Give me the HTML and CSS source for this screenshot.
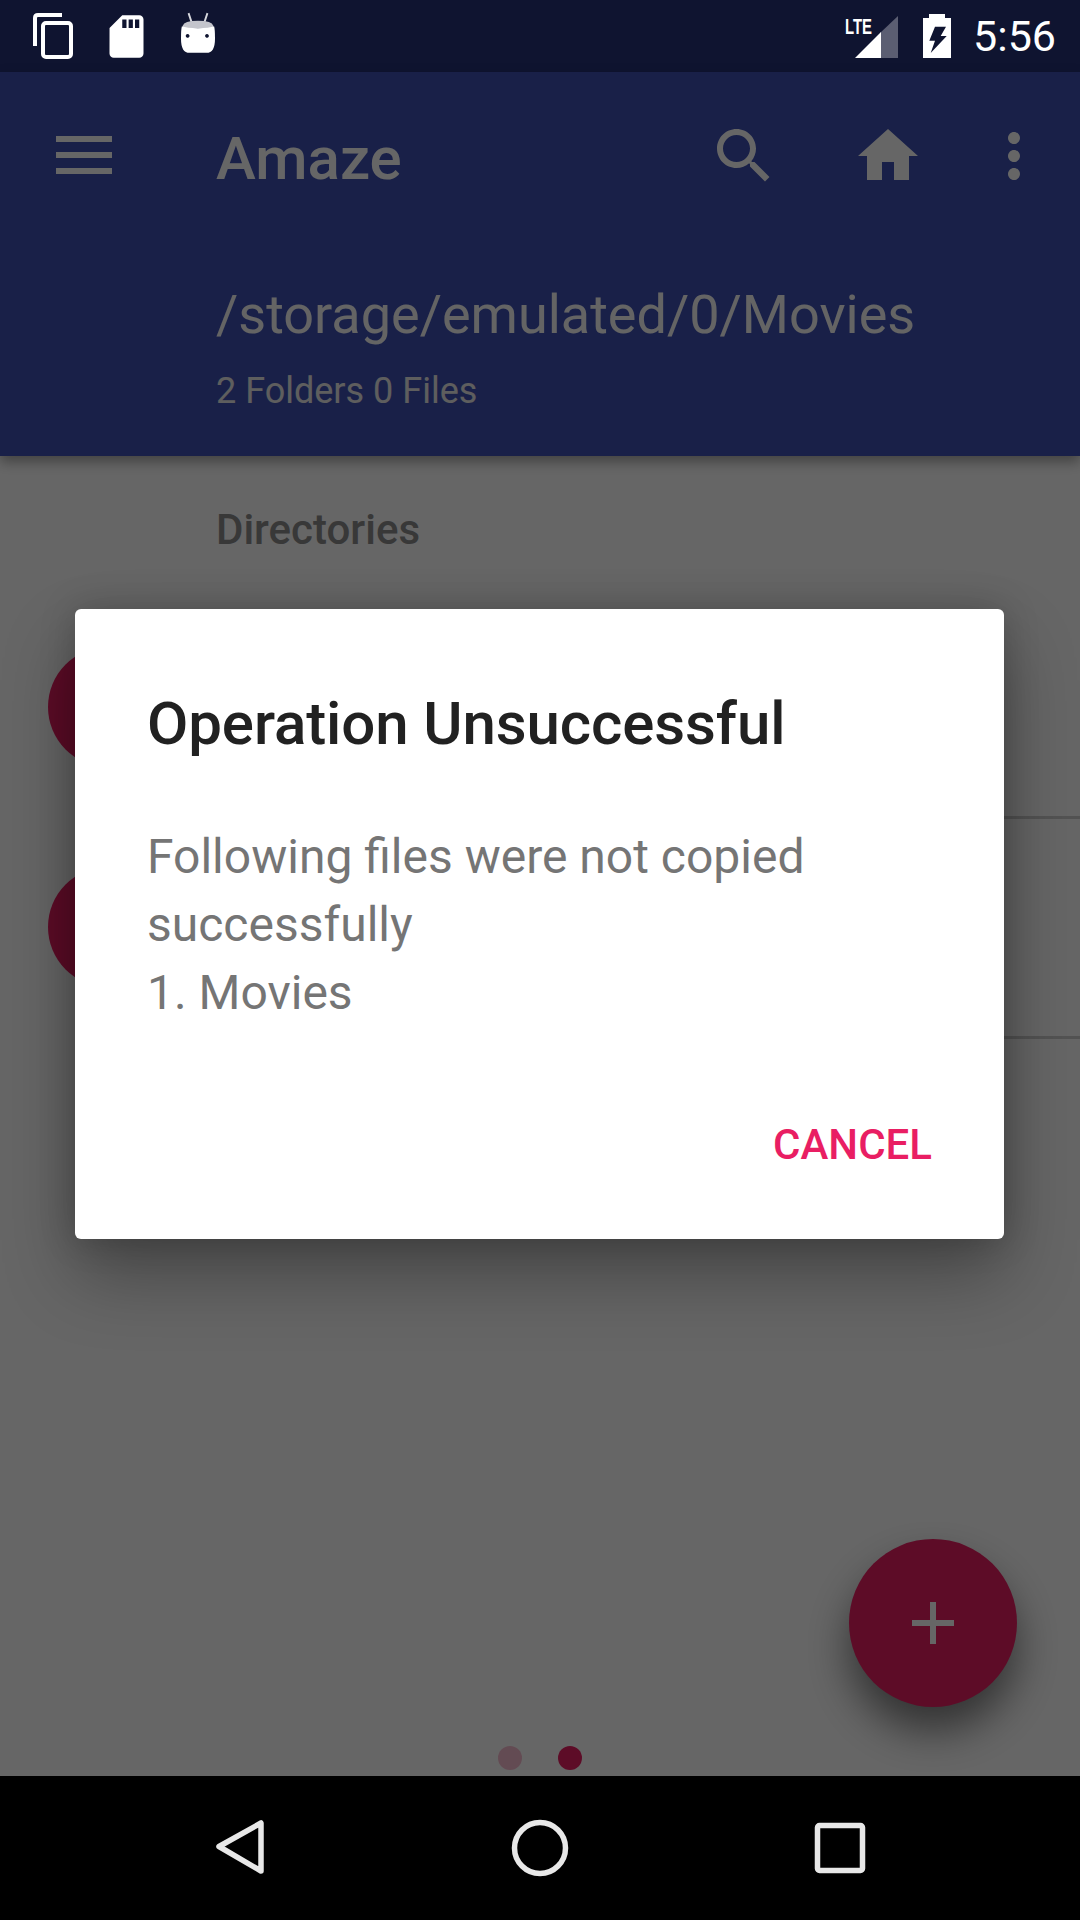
FILE: index.html
```html
<!DOCTYPE html>
<html lang="en">
<head>
    <meta charset="UTF-8">
    <meta name="viewport" content="width=device-width, initial-scale=1.0">
    <title>Amaze</title>
    <link rel="stylesheet" href="styles.css">
</head>
<body>
    <div class="phone">
        <!-- status bar -->
        <div class="status-bar">
            <svg class="status-copy" width="48" height="50" viewBox="0 0 48 50">
                <path class="copy-back" d="M2 33V5q0-3 3-3h24"/>
                <rect class="copy-front" x="10" y="10" width="28" height="34" rx="3"/>
            </svg>
            <svg class="status-sd" width="51" height="51" viewBox="0 0 24 24">
                <path d="M18 2h-8L4.020 8 4 20c0 1.100.9 2 2 2h12c1.100 0 2-.9 2-2V4c0-1.100-.9-2-2-2zm-6 6h-2V4h2v4zm3 0h-2V4h2v4zm3 0h-2V4h2v4z"/>
            </svg>
            <svg class="status-bot" width="34" height="41" viewBox="0 0 36 43">
                <path class="bot-ears" d="M8 1l3 9M28 1l-3 9"/>
                <path class="bot-top" d="M2 14q1-5 16-5t16 5v3H2z"/>
                <path class="bot-face" fill-rule="evenodd" d="M1 15q5 2 17 2t17-2q1 3 1 13 0 15-9 15H9q-9 0-9-15 0-10 1-13zM9 25a2 2 0 1 0 0 .1zM29.500 25a2 2 0 1 0 0 .1z"/>
            </svg>
            <div class="status-right">
                <svg class="status-signal" width="56" height="46" viewBox="0 0 56 46">
                    <text class="lte" x="1" y="21" textLength="27" lengthAdjust="spacingAndGlyphs">LTE</text>
                    <path class="signal-empty" d="M36 20L54 3v42H36z"/>
                    <path class="signal-full" d="M11 45l26-26v26z"/>
                </svg>
                <svg class="status-battery" width="30" height="44" viewBox="0 0 30 44">
                    <path d="M7 0h16v4h6v40H1V4h6z"/>
                    <path class="bolt" d="M13 12.700h11L18.700 22h6L8.700 39 13 26.700H7.300z"/>
                </svg>
                <span class="clock">5:56</span>
            </div>
        </div>

        <div class="screen">
            <!-- toolbar -->
            <header class="appbar">
                <div class="toolbar">
                    <svg class="menu-icon" width="72" height="72" viewBox="0 0 72 72">
                        <path d="M8 16h56v6H8zM8 32h56v6H8zM8 48h56v6H8z"/>
                    </svg>
                    <h1 class="app-title">Amaze</h1>
                    <div class="actions">
                        <svg width="72" height="72" viewBox="0 0 24 24">
                            <path d="M15.500 14h-.79l-.28-.27C15.410 12.590 16 11.110 16 9.500 16 5.910 13.090 3 9.500 3S3 5.910 3 9.500 5.910 16 9.500 16c1.610 0 3.090-.59 4.230-1.570l.27.28v.79l5 4.990L20.490 19l-4.990-5zm-6 0C7.010 14 5 11.990 5 9.500S7.010 5 9.500 5 14 7.010 14 9.500 11.990 14 9.500 14z"/>
                        </svg>
                        <svg width="72" height="72" viewBox="0 0 24 24">
                            <path d="M10 20v-6h4v6h5v-8h3L12 3 2 12h3v8z"/>
                        </svg>
                        <svg width="72" height="72" viewBox="0 0 24 24">
                            <path d="M12 8c1.100 0 2-.9 2-2s-.9-2-2-2-2 .9-2 2 .9 2 2 2zm0 2c-1.100 0-2 .9-2 2s.9 2 2 2 2-.9 2-2-.9-2-2-2zm0 6c-1.100 0-2 .9-2 2s.9 2 2 2 2-.9 2-2-.9-2-2-2z"/>
                        </svg>
                    </div>
                </div>
                <div class="path-info">
                    <div class="path">/storage/emulated/0/Movies</div>
                    <div class="counts">2 Folders 0 Files</div>
                </div>
            </header>

            <!-- file list -->
            <main class="content">
                <h2 class="section-title">Directories</h2>
                <div class="row"><span class="row-icon"></span></div>
                <div class="row"><span class="row-icon"></span></div>
                <div class="pager">
                    <span class="pager-dot faded"></span>
                    <span class="pager-dot"></span>
                </div>
                <button class="fab" type="button">
                    <svg width="42" height="42" viewBox="0 0 42 42"><path d="M18 0h6v18h18v6H24v18h-6V24H0v-6h18z"/></svg>
                </button>
            </main>

            <!-- dialog -->
            <div class="scrim">
                <div class="dialog">
                    <h3 class="dialog-title">Operation Unsuccessful</h3>
                    <p class="dialog-text">Following files were not copied successfully<br>1. Movies</p>
                    <div class="dialog-actions">
                        <button class="dialog-button" type="button">CANCEL</button>
                    </div>
                </div>
            </div>
        </div>

        <!-- navigation bar -->
        <nav class="nav-bar">
            <svg width="60" height="60" viewBox="0 0 60 60"><path d="M9 28.500L51 5V53z"/></svg>
            <svg width="60" height="60" viewBox="0 0 60 60"><circle cx="30" cy="30" r="25.500"/></svg>
            <svg width="60" height="60" viewBox="0 0 60 60"><rect x="7.500" y="7.500" width="45" height="45" rx="2"/></svg>
        </nav>
    </div>
</body>
</html>
```

FILE: styles.css
```css
* {
    box-sizing: border-box;
}

body {
    margin: 0;
    font-family: Roboto, "Noto Sans", sans-serif;
    background-color: #000;
}

svg {
    display: block;
}

.phone {
    width: 1080px;
    height: 1920px;
    display: flex;
    flex-direction: column;
    overflow: hidden;
}

/* status bar */
.status-bar {
    height: 72px;
    flex-shrink: 0;
    display: flex;
    align-items: center;
    background-color: #0f1430;
    padding-left: 33px;
    color: #fff;
}

.status-bar svg {
    fill: #fff;
}

.status-copy {
    margin-top: 3px;
    flex-shrink: 0;
}

.status-copy .copy-back,
.status-copy .copy-front {
    fill: none;
    stroke: #fff;
    stroke-width: 4;
}

.status-sd {
    margin-left: 20px;
    flex-shrink: 0;
}

.status-bot {
    margin-left: 29px;
    margin-top: -8px;
    flex-shrink: 0;
}

.status-bot .bot-ears {
    fill: none;
    stroke: #d8d9de;
    stroke-width: 2;
}

.status-bar .bot-top {
    fill: #c4c5cc;
}

.status-right {
    margin-left: auto;
    padding-right: 24px;
    display: flex;
    align-items: center;
}

.status-signal {
    margin-top: -1px;
}

.status-bar .signal-empty {
    fill: #5b5e72;
}

.lte {
    font-family: "Liberation Sans", sans-serif;
    font-size: 22px;
    font-weight: 700;
}

.status-battery {
    margin-left: 22px;
}

.status-bar .bolt {
    fill: #0f1430;
}

.clock {
    margin-left: 21px;
    font-size: 43px;
    line-height: 72px;
}

/* main area */
.screen {
    position: relative;
    flex: 1;
    display: flex;
    flex-direction: column;
    background-color: #fff;
}

.appbar {
    height: 384px;
    flex-shrink: 0;
    background-color: #3f51b5;
    color: #fff;
    box-shadow: 0 6px 12px rgba(0, 0, 0, 0.35);
    position: relative;
    z-index: 1;
}

.appbar svg {
    fill: #fff;
}

.toolbar {
    display: flex;
    align-items: flex-start;
    padding: 48px 30px 0 48px;
}

.app-title {
    margin: 3px 0 0 96px;
    font-size: 60px;
    font-weight: 500;
    line-height: 72px;
}

.actions {
    margin-left: auto;
    display: flex;
    gap: 72px;
}

.actions svg:last-child {
    margin-left: -18px;
}

.path-info {
    padding: 84px 0 0 216px;
}

.path {
    font-size: 54px;
    line-height: 72px;
    color: #fafafa;
}

.counts {
    margin-top: 16px;
    font-size: 36px;
    line-height: 48px;
    color: #ebebeb;
}

/* list */
.content {
    position: relative;
    flex: 1;
    display: flex;
    flex-direction: column;
}

.section-title {
    margin: 0;
    height: 141px;
    padding: 50px 0 0 216px;
    font-size: 42px;
    font-weight: 500;
    line-height: 48px;
    color: #8c8c8c;
}

.row {
    height: 220px;
    flex-shrink: 0;
    display: flex;
    align-items: center;
    padding-left: 48px;
    position: relative;
}

.row::after {
    content: "";
    position: absolute;
    left: 216px;
    right: 0;
    bottom: -2px;
    height: 3px;
    background-color: #d0d0d0;
}

.row-icon {
    width: 120px;
    height: 120px;
    border-radius: 50%;
    background-color: #e91e63;
}

.pager {
    margin-top: auto;
    height: 30px;
    display: flex;
    justify-content: center;
    gap: 36px;
}

.pager-dot {
    width: 24px;
    height: 24px;
    border-radius: 50%;
    background-color: #e91e63;
}

.pager-dot.faded {
    opacity: 0.3;
}

.fab {
    position: absolute;
    right: 63px;
    bottom: 69px;
    width: 168px;
    height: 168px;
    padding: 0;
    border: none;
    border-radius: 50%;
    background-color: #e91e63;
    display: flex;
    align-items: center;
    justify-content: center;
    box-shadow: 0 24px 42px rgba(0, 0, 0, 0.5);
}

.fab svg {
    fill: #fff;
}

/* dialog */
.scrim {
    position: absolute;
    inset: 0;
    z-index: 2;
    display: flex;
    align-items: center;
    justify-content: center;
    background-color: rgba(0, 0, 0, 0.6);
}

.dialog {
    width: 929px;
    height: 630px;
    margin-right: 1px;
    padding: 0 72px;
    background-color: #fff;
    border-radius: 6px;
    box-shadow: 0 36px 72px rgba(0, 0, 0, 0.32), 0 0 36px rgba(0, 0, 0, 0.2);
}

.dialog-title {
    margin: 0;
    padding-top: 73px;
    font-size: 60px;
    font-weight: 500;
    line-height: 84px;
    letter-spacing: -0.1px;
    color: #212121;
}

.dialog-text {
    margin: 57px 0 0;
    font-size: 48px;
    line-height: 68px;
    color: #757575;
}

.dialog-actions {
    display: flex;
    justify-content: flex-end;
    margin-top: 90px;
}

.dialog-button {
    padding: 0;
    border: none;
    background: none;
    font-family: inherit;
    font-size: 42px;
    font-weight: 500;
    line-height: 56px;
    color: #e91e63;
}

/* navigation bar */
.nav-bar {
    height: 144px;
    flex-shrink: 0;
    display: grid;
    grid-template-columns: repeat(3, 300px);
    padding: 0 90px;
    justify-items: center;
    align-items: center;
    background-color: #000;
}

.nav-bar svg {
    fill: none;
    stroke: #e8e8e8;
    stroke-width: 5.500;
    stroke-linejoin: round;
}
```
